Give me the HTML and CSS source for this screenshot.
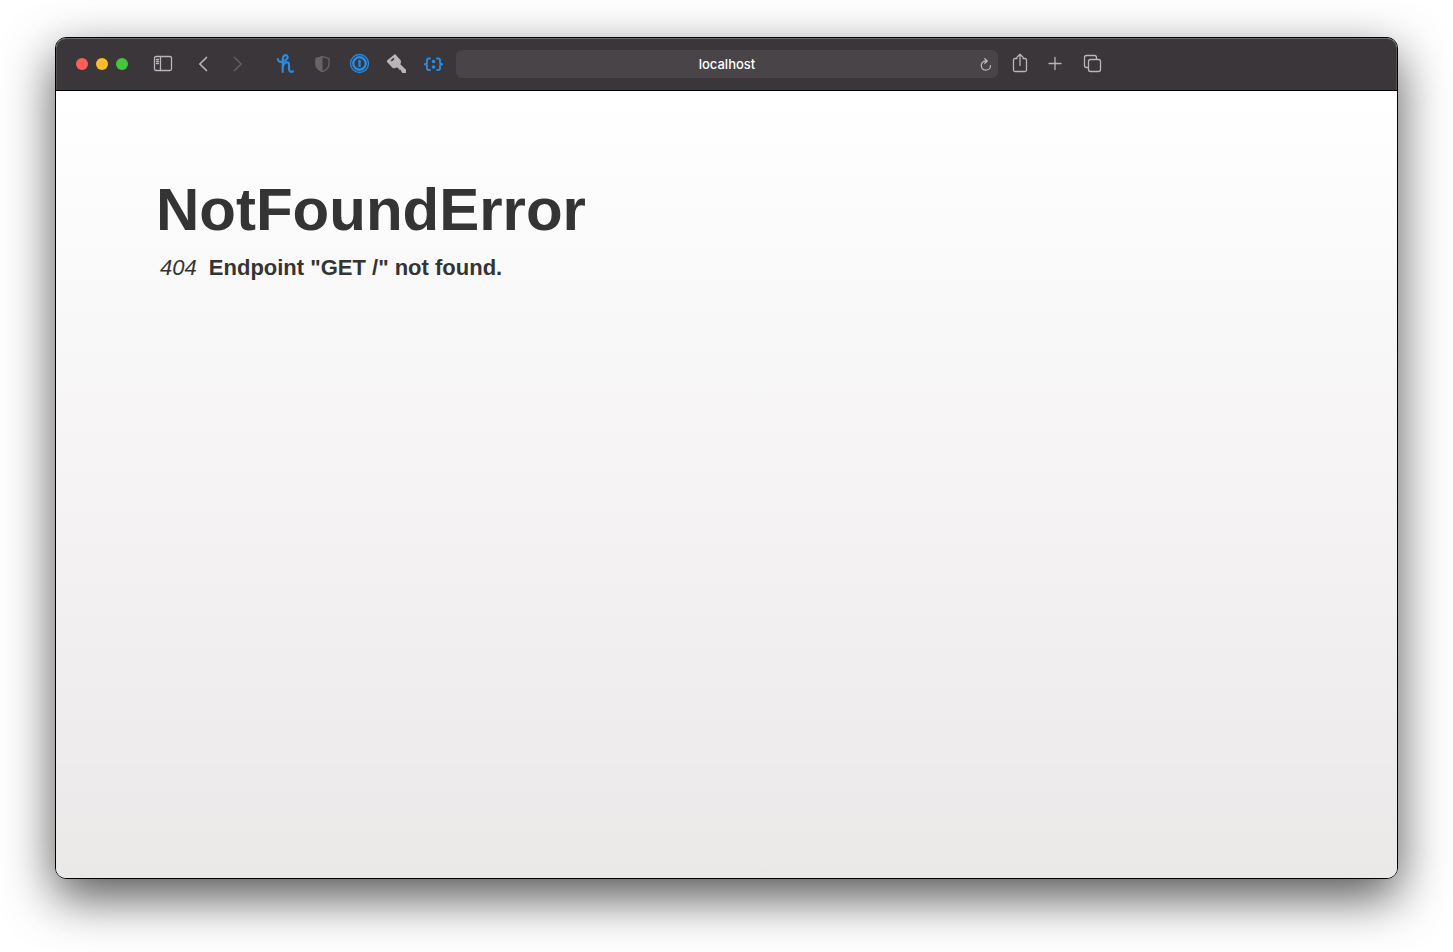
FILE: index.html
```html
<!DOCTYPE html>
<html lang="en">
<head>
<meta charset="utf-8">
<title>NotFoundError</title>
<link rel="stylesheet" href="styles.css">
</head>
<body>
<div class="window">
  <header class="toolbar">
    <div class="tools">
      <div class="lights">
        <button class="light light-close" aria-label="Close"></button>
        <button class="light light-minimize" aria-label="Minimize"></button>
        <button class="light light-zoom" aria-label="Zoom"></button>
      </div>
      <button class="tool" aria-label="Sidebar">
        <svg viewBox="0 0 24 24"><rect x="3.5" y="4.500" width="17" height="14" rx="1.500"/><path d="M9.500 4.500v14M5.500 7.500h2M5.500 9.500h2M5.500 11.500h2"/></svg>
      </button>
      <div class="history">
        <button class="tool" aria-label="Back"><svg viewBox="0 0 24 24"><path class="chevron" d="M15.500 5.500L8.800 12l6.700 6.500"/></svg></button>
        <button class="tool tool-off" aria-label="Forward"><svg viewBox="0 0 24 24"><path class="chevron" d="M8.500 5.500L15.200 12l-6.700 6.500"/></svg></button>
      </div>
      <div class="extensions">
        <button class="tool tool-blue" aria-label="Honey">
          <svg viewBox="0 0 24 24"><path class="honey" d="M4 7.200C3.800 9.500 6 10.300 8.500 9.500C11.500 8.500 14 6.500 13.600 4.500C13.200 2.700 10.700 2.500 9.500 4.300C8.500 6 8.700 9 8.700 12V20M8.700 15C9.500 11.500 12 9.800 13.800 10.400C15.700 11 15 14.500 15 17C15 19.700 17.200 20.300 19 19.300"/></svg>
        </button>
        <button class="tool tool-shield" aria-label="Privacy shield">
          <svg viewBox="0 0 24 24"><path d="M11.500 4.500l6.500 2.200v5.300c0 3.500-2.500 6-6.500 7.700-4-1.700-6.500-4.200-6.500-7.700V6.700z"/><path class="solid" d="M11.500 4v16C7 18.300 4.500 15.500 4.500 12V6.400z"/></svg>
        </button>
        <button class="tool tool-blue" aria-label="1Password">
          <svg viewBox="0 0 24 24"><circle cx="11.500" cy="11.500" r="9"/><circle class="ring" cx="11.500" cy="11.500" r="6.200"/><path class="bar" d="M11.500 8v7"/></svg>
        </button>
        <button class="tool" aria-label="Passwords">
          <svg viewBox="0 0 24 24"><path class="solid key" fill-rule="evenodd" d="M10 2L2 8.500c-.3 1 0 1.500.5 2L7.800 16c1 .7 2.500.3 3.700-.5l1.500.2 1 1.800 1.800.5.500 1.500L17.500 21H21v-3.200l-5.700-5.600c.7-1.200 1-2.700.4-4zM8.300 5.800L9.500 7 6.800 9.600 5.600 8.400z"/></svg>
        </button>
        <button class="tool tool-blue" aria-label="JSON viewer">
          <svg viewBox="0 0 24 24"><path class="brace" d="M8 6.500H6.800Q5 6.500 5 8.300V10.300Q5 12.200 2.800 12.200Q5 12.200 5 14.100V16.200Q5 18 6.800 18H8M15 6.500h1.200Q18 6.500 18 8.300V10.300Q18 12.200 20.200 12.200Q18 12.200 18 14.100V16.200Q18 18 16.200 18H15"/><circle class="solid" cx="11.500" cy="9.500" r="1.800"/><circle class="solid" cx="11.500" cy="15" r="1.800"/></svg>
        </button>
      </div>
    </div>
    <div class="address">
      <input class="address-input" type="text" value="localhost" aria-label="Address">
      <button class="reload" aria-label="Reload">
        <svg viewBox="0 0 14 14"><path d="M8 3H6.600A4.600 4.600 0 1 0 11.500 7.700M5.800 .8L8.300 3 5.800 5.300"/></svg>
      </button>
    </div>
    <div class="actions">
      <button class="tool" aria-label="Share"><svg viewBox="0 0 24 24"><path d="M9 6.500H7Q5.500 6.500 5.500 8v10q0 1.500 1.500 1.500h10q1.500 0 1.500-1.500V8q0-1.500-1.500-1.500h-2M12 13.500V2.500M9 5.300l3-3 3 3"/></svg></button>
      <button class="tool" aria-label="New tab"><svg viewBox="0 0 24 24"><path d="M5 11.500h12M11 5.500v12"/></svg></button>
      <button class="tool" aria-label="Tab overview"><svg viewBox="0 0 24 24"><path d="M8 15.500H6.500q-2 0-2-2v-8q0-2 2-2h8q2 0 2 2V7"/><rect x="8.500" y="7.500" width="12" height="12" rx="2"/></svg></button>
    </div>
  </header>
  <main class="page">
    <h1 class="title">NotFoundError</h1>
    <h2 class="detail"><em class="code">404</em> Endpoint "GET /" not found.</h2>
  </main>
</div>
</body>
</html>
```

FILE: styles.css
```css
* {
  box-sizing: border-box;
}

body {
  margin: 0;
  min-height: 100vh;
  display: flex;
  padding: 37px 55px 73px;
  background: #fff;
}

.window {
  flex: 1;
  display: flex;
  flex-direction: column;
  overflow: hidden;
  border: 1px solid #000;
  border-radius: 11px;
  box-shadow: 0 18px 50px rgba(0, 0, 0, 0.68);
}

.toolbar {
  display: grid;
  grid-template-columns: 400px minmax(120px, 1fr) 399px;
  align-items: center;
  height: 53px;
  border-bottom: 1px solid #000;
  border-radius: 10px 10px 0 0;
  background: #3b3639;
  box-shadow: inset 0 1px 0 #6b686a, inset 1px 0 0 #545053, inset -1px 0 0 #545053;
}

.tools,
.lights,
.history,
.extensions,
.actions {
  display: flex;
  align-items: center;
}

.tools {
  padding-left: 20px;
}

.lights {
  gap: 8px;
  margin-right: 23px;
}

.history {
  gap: 11px;
  margin: 0 24px 0 16px;
}

.extensions {
  gap: 13px;
}

.actions {
  gap: 12px;
  padding-left: 10px;
}

button {
  padding: 0;
  border: 0;
  background: none;
}

.light {
  width: 12px;
  height: 12px;
  border-radius: 50%;
}

.light-close {
  background: #ff5f57;
}

.light-minimize {
  background: #febb2e;
}

.light-zoom {
  background: #43c83c;
}

.tool {
  width: 24px;
  height: 24px;
  color: #b9b6b8;
}

.tool-off {
  color: #615d60;
}

.tool-shield {
  color: #676366;
}

.tool-blue {
  color: #2b8be0;
}

svg {
  display: block;
  width: 100%;
  height: 100%;
  fill: none;
  stroke: currentColor;
  stroke-width: 1.3;
  stroke-linecap: round;
  stroke-linejoin: round;
}

.chevron {
  stroke-width: 1.7;
}

.solid {
  fill: currentColor;
  stroke: none;
}

.honey {
  stroke-width: 2.2;
}

.ring {
  stroke-width: 2.4;
}

.bar {
  stroke-width: 2.4;
  stroke-linecap: butt;
}

.brace {
  stroke-width: 1.9;
}

.address {
  position: relative;
}

.address-input {
  display: block;
  width: 100%;
  height: 28px;
  padding: 0 28px;
  border: 0;
  border-radius: 6px;
  background: #484447;
  color: #fff;
  font: 500 13px/28px Inter, sans-serif;
  text-align: center;
}

.reload {
  position: absolute;
  top: 8px;
  right: 5px;
  width: 14px;
  height: 14px;
  color: #b9b6b8;
}

.page {
  flex: 1;
  padding: 80px 100px;
  background: linear-gradient(#fff, #f4f2f3 55%, #eae9e8);
  color: #343434;
  font-family: "Liberation Sans", Arial, sans-serif;
}

.title {
  margin: 0;
  font-size: 60px;
  line-height: 78px;
}

.detail {
  margin: 5px 0 0 4px;
  font-size: 22px;
  line-height: 28px;
}

.code {
  margin-right: 6px;
  font-weight: 400;
}
```
